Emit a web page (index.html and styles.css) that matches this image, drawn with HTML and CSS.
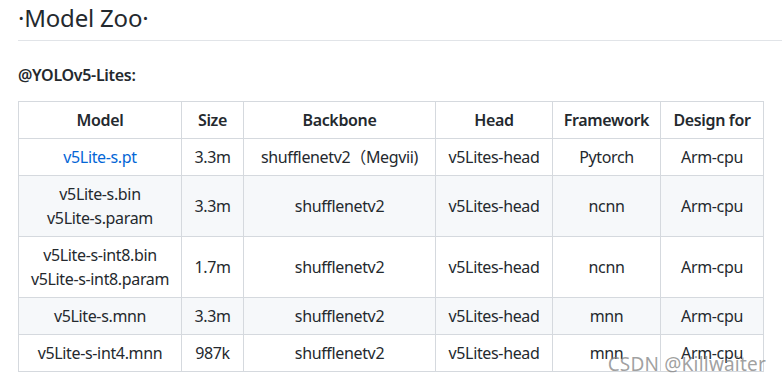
FILE: index.html
```html
<!DOCTYPE html>
<html>
<head>
<meta charset="utf-8">
<link rel="stylesheet" href="styles.css">
</head>
<body>
<div class="markdown">
  <h2 class="title">·Model Zoo·</h2>
  <h4 class="subtitle">@YOLOv5-Lites:</h4>
  <table class="zoo">
    <colgroup>
      <col class="c-model"><col class="c-size"><col class="c-backbone"><col class="c-head"><col class="c-fw"><col class="c-design">
    </colgroup>
    <thead>
      <tr><th>Model</th><th>Size</th><th>Backbone</th><th>Head</th><th>Framework</th><th>Design for</th></tr>
    </thead>
    <tbody>
      <tr><td><a class="link" href="#">v5Lite-s.pt</a></td><td>3.3m</td><td>shufflenetv2（Megvii)</td><td>v5Lites-head</td><td>Pytorch</td><td>Arm-cpu</td></tr>
      <tr><td>v5Lite-s.bin<br>v5Lite-s.param</td><td>3.3m</td><td>shufflenetv2</td><td>v5Lites-head</td><td>ncnn</td><td>Arm-cpu</td></tr>
      <tr><td>v5Lite-s-int8.bin<br>v5Lite-s-int8.param</td><td>1.7m</td><td>shufflenetv2</td><td>v5Lites-head</td><td>ncnn</td><td>Arm-cpu</td></tr>
      <tr><td>v5Lite-s.mnn</td><td>3.3m</td><td>shufflenetv2</td><td>v5Lites-head</td><td>mnn</td><td>Arm-cpu</td></tr>
      <tr><td>v5Lite-s-int4.mnn</td><td>987k</td><td>shufflenetv2</td><td>v5Lites-head</td><td>mnn</td><td>Arm-cpu</td></tr>
    </tbody>
  </table>
</div>
<div class="watermark">CSDN @Killwaiter</div>
</body>
</html>
```
FILE: styles.css
```css
html, body {
  margin: 0;
  padding: 0;
  background: #ffffff;
}
body {
  font-family: "Noto Sans", "Noto Sans CJK SC", sans-serif;
  color: #24292e;
  font-size: 16px;
  line-height: 1.5;
}
.markdown {
  padding: 3px 0 0 18px;
}
.title {
  margin: 0 0 16px 0;
  font-size: 24px;
  font-weight: 400;
  line-height: 30px;
  padding-bottom: 7px;
  border-bottom: 1px solid #e1e4e8;
  letter-spacing: -0.2px;
}
.subtitle {
  margin: 24px 0 16px 0;
  font-size: 16px;
  font-weight: 600;
  line-height: 20px;
  letter-spacing: -0.3px;
}
.zoo {
  border-collapse: collapse;
  border-spacing: 0;
  table-layout: fixed;
  width: 745px;
}
.c-model { width: 163px; }
.c-size { width: 62px; }
.c-backbone { width: 192px; }
.c-head { width: 117px; }
.c-fw { width: 108px; }
.c-design { width: 103px; }
.zoo th, .zoo td {
  border: 1px solid #d5d9de;
  padding: 6px 0;
  text-align: center;
  white-space: nowrap;
  line-height: 24px;
  letter-spacing: -0.35px;
}
.zoo th {
  font-weight: 600;
}
.zoo tbody tr:nth-child(even) {
  background: #f6f8fa;
}
.link {
  color: #0366d6;
  text-decoration: none;
}
.watermark {
  position: absolute;
  right: 16px;
  bottom: 8px;
  font-family: "Noto Sans", sans-serif;
  font-size: 19px;
  color: rgba(130, 130, 130, 0.75);
  letter-spacing: 0.2px;
}
```
